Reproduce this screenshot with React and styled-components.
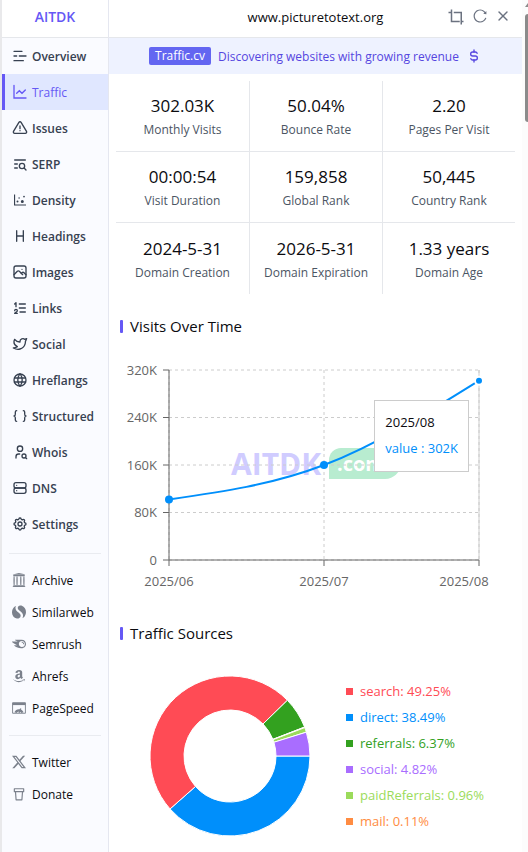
import React from 'react'

import styled, { createGlobalStyle } from 'styled-components'

import {
  TbAlertTriangle,
  TbListSearch,
  TbLetterH,
  TbPhoto,
  TbListNumbers,
  TbBrandTwitter,
  TbWorld,
  TbBraces,
  TbUserSearch,
  TbServer,
  TbSettings,
  TbX,
  TbCurrencyDollar
} from 'react-icons/tb'
import { AiOutlineDotChart, AiOutlineReload } from 'react-icons/ai'
import { SiInternetarchive, SiSimilarweb, SiSemrush } from 'react-icons/si'
import { FaAmazon } from 'react-icons/fa'
import { BsTwitterX } from 'react-icons/bs'

const GlobalStyle = createGlobalStyle`
  * {
    box-sizing: border-box;
  }
  body {
    margin: 0;
    background: #fff;
    color: #0b0b0f;
    font-family: 'Open Sans', 'Noto Sans', sans-serif;
    font-size: 12px;
  }
`

const Page = styled.div`
  display: flex;
  min-height: 100vh;
  border-left: 2px solid #e9e9eb;
`

const Sidebar = styled.aside`
  flex: none;
  width: 107px;
  background: #fafbff;
  border-right: 1px solid #e5e7f0;
`

const Brand = styled.div`
  display: flex;
  align-items: center;
  justify-content: center;
  height: 38px;
  padding-bottom: 4px;
  background: #fff;
  border-bottom: 1px solid #e5e7eb;
  color: #6558f5;
  font-size: 14px;
  font-weight: 600;
`

const NavLink = styled.a`
  display: flex;
  align-items: center;
  gap: 4px;
  height: 36px;
  padding-left: 7px;
  border-left: 3px solid ${props => props.$active ? '#6558f5' : 'transparent'};
  background: ${props => props.$active ? '#e0e7ff' : 'transparent'};
  color: ${props => props.$active ? '#6558f5' : '#374151'};
  font-weight: ${props => props.$active ? '500' : '600'};
  text-decoration: none;

  svg {
    flex: none;
    width: 16px;
    height: 16px;
  }
`

const ToolLink = styled.a`
  display: flex;
  align-items: center;
  gap: 6px;
  height: 32px;
  padding-left: 10px;
  color: #0b0b0f;
  text-decoration: none;

  svg {
    flex: none;
    width: 14px;
    height: 14px;
    color: #7b818c;
  }
`

const Divider = styled.hr`
  height: 1px;
  margin: 11px 7px 10px;
  border: 0;
  background: #e9ebf0;
`

const Main = styled.main`
  flex: 1;
  min-width: 0;
`

const Header = styled.header`
  display: grid;
  grid-template-columns: 1fr auto 1fr;
  align-items: center;
  height: 38px;
  padding-bottom: 3px;
  border-bottom: 1px solid #e5e7eb;
`

const Domain = styled.h1`
  grid-column: 2;
  margin: 0;
  font-size: 13px;
  font-weight: 400;
`

const Actions = styled.div`
  display: flex;
  justify-content: flex-end;
  gap: 7px;
  padding-right: 11px;
`

const IconButton = styled.button`
  display: flex;
  padding: 0;
  border: 0;
  background: none;
  color: #6b7280;
  cursor: pointer;
`

const Banner = styled.a`
  display: flex;
  align-items: center;
  justify-content: center;
  gap: 7px;
  height: 36px;
  background: #eef2ff;
  color: #5546e0;
  font-weight: 500;
  text-decoration: none;
`

const BannerTag = styled.span`
  padding: 0 6px;
  border-radius: 2px;
  background: #6366f1;
  color: #fff;
  line-height: 18px;
`

const Stats = styled.dl`
  display: grid;
  grid-template-columns: repeat(3, 1fr);
  margin: 7px 7px 0;
`

const Stat = styled.div`
  display: flex;
  flex-direction: column-reverse;
  justify-content: center;
  height: 71px;
  border-left: ${props => props.$first ? '0' : '1px solid #e5e7eb'};
  border-bottom: ${props => props.$last ? '0' : '1px solid #e5e7eb'};
  text-align: center;
`

const StatLabel = styled.dt`
  color: #4b5563;
  line-height: 20px;
`

const StatValue = styled.dd`
  margin: 0;
  font-size: 17px;
  line-height: 28px;
`

const SectionTitle = styled.h2`
  display: flex;
  align-items: center;
  gap: 7px;
  margin: 0;
  padding: 20px 11px 0;
  font-size: 15px;
  font-weight: 400;
  line-height: 24px;

  &::before {
    content: '';
    width: 3px;
    height: 13px;
    border-radius: 1px;
    background: #6558f5;
  }
`

const ChartBox = styled.div`
  position: relative;
  margin-top: 12px;
`

const Chart = styled.svg`
  display: block;
  width: 100%;
  font-size: 13px;
`

const Tooltip = styled.div`
  position: absolute;
  top: 50px;
  right: 53px;
  padding: 8px 10px 10px;
  border: 1px solid #ccc;
  background: #fff;
  font-size: 13px;
  line-height: 26px;
  white-space: nowrap;
`

const TooltipValue = styled.div`
  color: #008ffb;
`

const Sources = styled.div`
  display: flex;
  align-items: center;
  gap: 36px;
  padding: 31px 0 0 41px;
`

const Pie = styled.svg`
  flex: none;
  width: 160px;
  height: 160px;
`

const Legend = styled.ul`
  margin: 0;
  padding: 0;
  list-style: none;
`

const LegendItem = styled.li`
  display: flex;
  align-items: center;
  gap: 7px;
  height: 26px;
  color: ${props => props.$color};
  font-size: 13px;

  &::before {
    content: '';
    width: 7px;
    height: 7px;
    background: ${props => props.$color};
  }
`

const Gutter = styled.div`
  flex: none;
  display: flex;
  flex-direction: column;
  align-items: flex-end;
  gap: 7px;
  width: 6px;
  padding-top: 3px;
  background: #fcfcfc;
`

const Thumb = styled.div`
  width: 3px;
  height: 108px;
  border-radius: 3px 0 0 3px;
  background: #8b8b8b;
`

const OverviewIcon = () => (
  <svg viewBox='0 0 24 24' fill='none' stroke='currentColor' strokeWidth='2' strokeLinecap='round'>
    <path d='M3 5h12M3 12h4M11 12h10M3 19h14' />
  </svg>
)

const TrafficIcon = () => (
  <svg viewBox='0 0 24 24' fill='none' stroke='currentColor' strokeWidth='2' strokeLinecap='round'>
    <path d='M3 2v19h18M7 14l4-4 4 4 5-5' />
  </svg>
)

const CropIcon = () => (
  <svg width='18' height='18' viewBox='0 0 24 24' fill='none' stroke='currentColor' strokeWidth='2'>
    <path d='M6 2v16h11M2 6h3M9 6h10v16M19 18h3' />
  </svg>
)

const SpeedIcon = () => (
  <svg viewBox='0 0 24 24' fill='none' stroke='currentColor'>
    <path d='M1 3h22v18H1z' strokeWidth='1.6' />
    <path d='M1 5h22' strokeWidth='4' />
    <path d='M6 20a6.5 6.5 0 0 1 12 0' strokeWidth='4' />
    <path d='M12 20l3-7' strokeWidth='2.4' />
  </svg>
)

const CupIcon = () => (
  <svg viewBox='0 0 24 24' fill='none' stroke='currentColor' strokeWidth='2' strokeLinejoin='round'>
    <path d='M4 3h16v5H4zM6 8l1 14h10l1-14' />
  </svg>
)

const pages = [
  { name: 'Overview', Icon: OverviewIcon },
  { name: 'Traffic', Icon: TrafficIcon },
  { name: 'Issues', Icon: TbAlertTriangle },
  { name: 'SERP', Icon: TbListSearch },
  { name: 'Density', Icon: AiOutlineDotChart },
  { name: 'Headings', Icon: TbLetterH },
  { name: 'Images', Icon: TbPhoto },
  { name: 'Links', Icon: TbListNumbers },
  { name: 'Social', Icon: TbBrandTwitter },
  { name: 'Hreflangs', Icon: TbWorld },
  { name: 'Structured', Icon: TbBraces },
  { name: 'Whois', Icon: TbUserSearch },
  { name: 'DNS', Icon: TbServer },
  { name: 'Settings', Icon: TbSettings }
]

const tools = [
  { name: 'Archive', Icon: SiInternetarchive },
  { name: 'Similarweb', Icon: SiSimilarweb },
  { name: 'Semrush', Icon: SiSemrush },
  { name: 'Ahrefs', Icon: FaAmazon },
  { name: 'PageSpeed', Icon: SpeedIcon }
]

const more = [
  { name: 'Twitter', Icon: BsTwitterX },
  { name: 'Donate', Icon: CupIcon }
]

const stats = [
  ['Monthly Visits', '302.03K'],
  ['Bounce Rate', '50.04%'],
  ['Pages Per Visit', '2.20'],
  ['Visit Duration', '00:00:54'],
  ['Global Rank', '159,858'],
  ['Country Rank', '50,445'],
  ['Domain Creation', '2024-5-31'],
  ['Domain Expiration', '2026-5-31'],
  ['Domain Age', '1.33 years']
]

const legend = [
  { name: 'search', value: 49.25, color: '#ff4b55' },
  { name: 'direct', value: 38.49, color: '#008ffb' },
  { name: 'referrals', value: 6.37, color: '#33a11f' },
  { name: 'social', value: 4.82, color: '#a96dff' },
  { name: 'paidReferrals', value: 0.96, color: '#9bdb5b' },
  { name: 'mail', value: 0.11, color: '#ff8c42' }
]

// clockwise from three o'clock
const pieOrder = ['direct', 'search', 'referrals', 'mail', 'paidReferrals', 'social']

const yTicks = [
  { label: '320K', y: 20 },
  { label: '240K', y: 67 },
  { label: '160K', y: 115 },
  { label: '80K', y: 162 },
  { label: '0', y: 210 }
]

const xTicks = [
  { label: '2025/06', x: 60, textX: 60 },
  { label: '2025/07', x: 215, textX: 215 },
  { label: '2025/08', x: 370, textX: 355 }
]

const point = (radius, angle) =>
  `${80 + radius * Math.cos(angle)} ${80 + radius * Math.sin(angle)}`

const slicePath = (start, end) => {
  const large = end - start > Math.PI ? 1 : 0
  return `M${point(80, start)} A80 80 0 ${large} 1 ${point(80, end)} L${point(46, end)} A46 46 0 ${large} 0 ${point(46, start)} Z`
}

const VisitsChart = () => (
  <Chart viewBox='0 0 413 251' role='img' aria-label='Visits over time'>
    <text x='122' y='125' fontSize='30' fontWeight='700' fill='#d0ccff'>AITDK</text>
    <path d='M232 98h60v15a16 16 0 0 1-16 16h-56v-19a12 12 0 0 1 12-12z' fill='#b8ecd0' />
    <text x='228' y='121' fontSize='20' fontWeight='700' fill='#fff'>.com</text>
    <g stroke='#ccc' strokeDasharray='3 3'>
      {yTicks.map(tick => (
        <path key={tick.label} d={tick.y % 5 ? `M60 ${tick.y}.5H370` : `M60 ${tick.y}H370`} />
      ))}
      {xTicks.map(tick => <path key={tick.label} d={`M${tick.x} 20V210`} />)}
    </g>
    <path d='M370 20V210' stroke='#ccc' />
    <g stroke='#666'>
      <path d='M60 20V210M60 210H370' />
      {yTicks.map(tick => (
        <path key={tick.label} d={tick.y % 5 ? `M54 ${tick.y}.5h6` : `M54 ${tick.y}h6`} />
      ))}
      {xTicks.map(tick => <path key={tick.label} d={`M${tick.x} 210v6`} />)}
    </g>
    <g fill='#666'>
      {yTicks.map(tick => (
        <text key={tick.label} x='48' y={tick.y + 5} textAnchor='end'>{tick.label}</text>
      ))}
      {xTicks.map(tick => (
        <text key={tick.label} x={tick.textX} y='236' textAnchor='middle'>{tick.label}</text>
      ))}
    </g>
    <path
      d='M60 149.4C111.7 142.1 163.3 134.8 215 115C266.7 95.2 318.3 63 370 30.7'
      fill='none'
      stroke='#008ffb'
      strokeWidth='2'
    />
    <circle cx='60' cy='149.4' r='4' fill='#008ffb' />
    <circle cx='215' cy='115' r='4' fill='#008ffb' />
    <circle cx='370' cy='30.7' r='4' fill='#008ffb' stroke='#fff' strokeWidth='2' />
  </Chart>
)

const SourcesPie = () => {
  let angle = 0
  return (
    <Pie viewBox='0 0 160 160' overflow='visible' role='img' aria-label='Traffic sources'>
      {pieOrder.map(name => {
        const item = legend.find(entry => entry.name === name)
        const start = angle
        angle += item.value / 100 * Math.PI * 2
        return <path key={name} d={slicePath(start, angle)} fill={item.color} stroke='#fff' />
      })}
    </Pie>
  )
}

const ToolList = ({ items }) => items.map(({ name, Icon }) => (
  <ToolLink key={name} href='#'>
    <Icon />
    {name}
  </ToolLink>
))

export default () => {
  return (
    <Page>
      <GlobalStyle />
      <Sidebar>
        <Brand>AITDK</Brand>
        <nav>
          {pages.map(({ name, Icon }) => (
            <NavLink key={name} href='#' $active={name === 'Traffic'}>
              <Icon />
              {name}
            </NavLink>
          ))}
          <Divider />
          <ToolList items={tools} />
          <Divider />
          <ToolList items={more} />
        </nav>
      </Sidebar>
      <Main>
        <Header>
          <Domain>www.picturetotext.org</Domain>
          <Actions>
            <IconButton aria-label='Capture'><CropIcon /></IconButton>
            <IconButton aria-label='Reload'><AiOutlineReload size={16} /></IconButton>
            <IconButton aria-label='Close'><TbX size={16} /></IconButton>
          </Actions>
        </Header>
        <Banner href='#'>
          <BannerTag>Traffic.cv</BannerTag>
          Discovering websites with growing revenue
          <TbCurrencyDollar size={16} />
        </Banner>
        <Stats>
          {stats.map(([label, value], index) => (
            <Stat key={label} $first={index % 3 === 0} $last={index > 5}>
              <StatLabel>{label}</StatLabel>
              <StatValue>{value}</StatValue>
            </Stat>
          ))}
        </Stats>
        <SectionTitle>Visits Over Time</SectionTitle>
        <ChartBox>
          <VisitsChart />
          <Tooltip>
            <div>2025/08</div>
            <TooltipValue>value : 302K</TooltipValue>
          </Tooltip>
        </ChartBox>
        <SectionTitle>Traffic Sources</SectionTitle>
        <Sources>
          <SourcesPie />
          <Legend>
            {legend.map(({ name, value, color }) => (
              <LegendItem key={name} $color={color}>{name}: {value}%</LegendItem>
            ))}
          </Legend>
        </Sources>
      </Main>
      <Gutter>
        <svg width='3' height='4' viewBox='0 0 3 4'><path d='M3 0v4H0z' fill='#8b8b8b' /></svg>
        <Thumb />
      </Gutter>
    </Page>
  )
}
